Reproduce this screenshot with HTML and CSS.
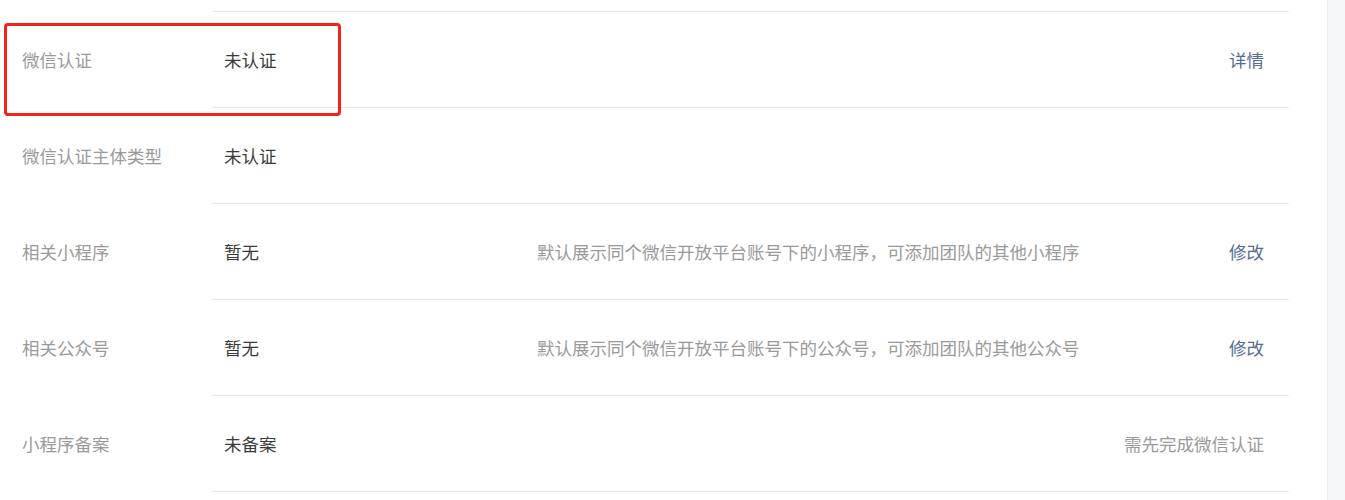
FILE: index.html
```html
<!DOCTYPE html>
<html lang="zh-CN">
<head>
<meta charset="utf-8">
<title>账号信息</title>
<link rel="stylesheet" href="styles.css">
</head>
<body>
<div class="page">
  <main class="main">
    <div class="info-list">
      <div class="row row-top">
        <div class="label"></div>
        <div class="content"></div>
      </div>
      <div class="row">
        <div class="label">微信认证</div>
        <div class="content">
          <div class="value">未认证</div>
          <div class="desc"></div>
          <a class="action">详情</a>
        </div>
      </div>
      <div class="row">
        <div class="label">微信认证主体类型</div>
        <div class="content">
          <div class="value">未认证</div>
          <div class="desc"></div>
        </div>
      </div>
      <div class="row">
        <div class="label">相关小程序</div>
        <div class="content">
          <div class="value">暂无</div>
          <div class="desc">默认展示同个微信开放平台账号下的小程序，可添加团队的其他小程序</div>
          <a class="action">修改</a>
        </div>
      </div>
      <div class="row">
        <div class="label">相关公众号</div>
        <div class="content">
          <div class="value">暂无</div>
          <div class="desc">默认展示同个微信开放平台账号下的公众号，可添加团队的其他公众号</div>
          <a class="action">修改</a>
        </div>
      </div>
      <div class="row">
        <div class="label">小程序备案</div>
        <div class="content">
          <div class="value">未备案</div>
          <div class="desc"></div>
          <span class="tip">需先完成微信认证</span>
        </div>
      </div>
    </div>
    <div class="highlight"></div>
  </main>
  <aside class="side"></aside>
</div>
</body>
</html>
```
FILE: styles.css
```css
html, body {
  margin: 0;
  padding: 0;
  background: #ffffff;
  overflow: hidden;
}
body {
  font-family: "Noto Sans CJK SC", "Noto Sans", "Liberation Sans", sans-serif;
  font-size: 17.5px;
  line-height: 1;
  color: #3b3b3b;
}
.page {
  display: flex;
  width: 1345px;
  height: 500px;
}
.main {
  position: relative;
  width: 1327px;
  flex: none;
}
.side {
  flex: 1;
  background: #f6f7f9;
  border-left: 1px solid #eceef1;
}
.info-list {
  display: flex;
  flex-direction: column;
  padding-right: 38px;
}
.row {
  display: flex;
  height: 96px;
}
.row-top {
  height: 12px;
}
.label {
  width: 212px;
  flex: none;
  box-sizing: border-box;
  padding-left: 22px;
  display: flex;
  align-items: center;
  color: #9a9a9a;
  white-space: nowrap;
}
.content {
  flex: 1;
  display: flex;
  align-items: center;
  box-sizing: border-box;
  border-bottom: 1px solid #e7e7e7;
  padding-left: 12px;
  padding-right: 25px;
}
.value {
  width: 313px;
  flex: none;
  color: #3b3b3b;
}
.desc {
  flex: 1;
  color: #9a9a9a;
  white-space: nowrap;
}
.action {
  color: #576b95;
  text-decoration: none;
  cursor: pointer;
}
.tip {
  color: #9a9a9a;
}
.highlight {
  position: absolute;
  left: 4px;
  top: 23px;
  width: 337px;
  height: 93px;
  box-sizing: border-box;
  border: 3.5px solid #f52219;
  border-radius: 4px;
}
```
